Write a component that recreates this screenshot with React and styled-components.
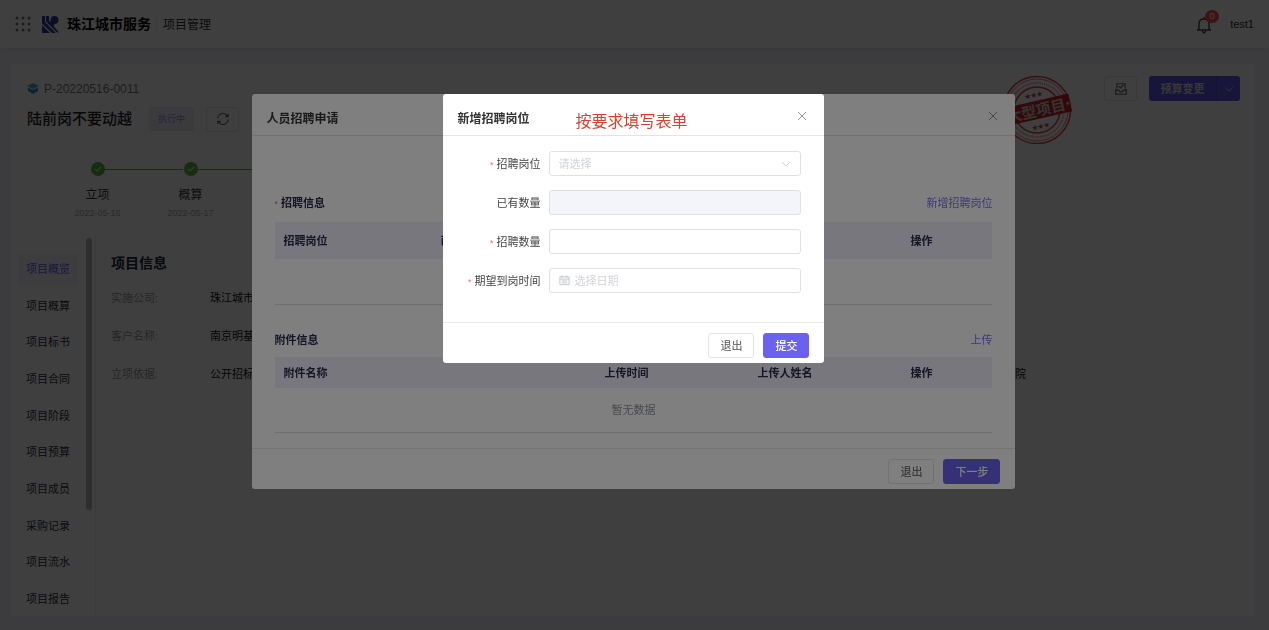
import React from "react";
import styled, { createGlobalStyle, css } from "styled-components";

const Global = createGlobalStyle`
  * { box-sizing: border-box; }
  html, body, #root { height: 100%; }
  body {
    margin: 0; overflow: hidden; background: #f0f0f8; color: #2d2d33;
    font: 11px/16px "Liberation Sans", "Noto Sans CJK SC", sans-serif;
  }
  button, input, select { font: inherit; }
  h1, h2, p, dl, dd, ol, ul { margin: 0; padding: 0; }
  ol, ul { list-style: none; }
`;

const Page = styled.div`
  height: 100vh;
  display: flex;
  flex-direction: column;
`;
const TopBar = styled.header`
  height: 48px;
  flex: none;
  padding: 0 15px;
  display: flex;
  align-items: center;
  background: #fff;
  box-shadow: 0 1px 4px rgba(0, 0, 0, 0.08);
`;
const Brand = styled.strong`
  margin-left: 8px;
  font-size: 14px;
  color: #000;
`;
const AppName = styled.span`
  margin-left: 5px;
  padding: 2px 0 0 6px;
  border-left: 1px solid #e8e8e8;
  font-size: 12px;
  color: #333;
`;
const LogoBox = styled.span`
  display: flex;
  margin-left: 9px;
`;
const Account = styled.div`
  margin-left: auto;
  display: flex;
  align-items: center;
  gap: 18px;
`;
const Bell = styled.span`
  position: relative;
  display: flex;
  padding-top: 2px;
`;
const Count = styled.span`
  position: absolute;
  left: 9px;
  top: -4px;
  width: 14px;
  height: 13px;
  border-radius: 7px;
  background: #ff4d5a;
  color: #fff;
  font-size: 9px;
  line-height: 13px;
  text-align: center;
`;
const Card = styled.main`
  flex: 1;
  min-height: 0;
  margin: 16px 15px 14px 11px;
  padding-top: 12px;
  display: flex;
  flex-direction: column;
  background: #fff;
`;
const ProjectHead = styled.div`
  display: flex;
  justify-content: space-between;
  padding: 0 14px 0 16px;
  height: 68px;
  flex: none;
`;
const Code = styled.p`
  display: flex;
  align-items: center;
  gap: 5px;
  height: 25px;
  font-size: 12px;
  color: #777;
`;
const NameRow = styled.div`
  display: flex;
  align-items: center;
  height: 36px;
`;
const ProjectName = styled.h1`
  font-size: 15px;
  line-height: 20px;
  font-weight: 500;
  color: #222;
`;
const Tag = styled.span`
  margin: 0 12px 0 17px;
  padding: 0 9px;
  line-height: 24px;
  font-size: 9px;
  border-radius: 2px;
  background: #eeecfb;
  color: #9a90ea;
`;
const IconButton = styled.button`
  width: 33px;
  height: 25px;
  padding: 0;
  display: grid;
  place-items: center;
  background: #fff;
  border: 1px solid #e6e6e6;
  border-radius: 3px;
  color: #666;
`;
const Actions = styled.div`
  display: flex;
  align-items: flex-start;
  gap: 12px;
`;
const Split = styled.div`
  display: flex;
  border-radius: 3px;
  overflow: hidden;
`;
const SplitPart = styled.button`
  height: 25px;
  padding: 0;
  width: ${(p) => (p.$narrow ? 24 : 67)}px;
  display: grid;
  place-items: center;
  border: 0;
  border-left: ${(p) => (p.$narrow ? "1px solid #5048c0" : 0)};
  background: #6056e8;
  color: #ddd;
  font-weight: 700;
`;
const Stamp = styled.svg`
  display: block;
  margin: -1px 20px 0 0;
`;
const Steps = styled.ol`
  flex: none;
  height: 91px;
  margin: 0 14px 0 12px;
  padding: 18px 0 0 28px;
  display: flex;
  background: #fdfdfd;
`;
const Step = styled.li`
  position: relative;
  width: 93px;
  display: flex;
  flex-direction: column;
  align-items: center;
  color: #333;
  font-size: 12px;
  &::after {
    content: "";
    position: absolute;
    left: 54px;
    top: 7px;
    width: 78px;
    height: 1px;
    background: #58b038;
  }
`;
const StepName = styled.span`
  margin-top: 11px;
`;
const StepDate = styled.time`
  margin-top: 2px;
  font-size: 9px;
  color: #aaa;
`;
const Body = styled.div`
  flex: 1;
  min-height: 0;
  display: flex;
`;
const SideNav = styled.nav`
  width: 75px;
  flex: none;
  overflow: hidden;
  padding: 18px 0 0 7px;
`;
const NavList = styled.ul`
  height: 362px;
  display: flex;
  flex-direction: column;
  justify-content: space-between;
`;
const NavLink = styled.a`
  display: block;
  width: 60px;
  line-height: 32px;
  text-align: center;
  text-decoration: none;
  color: ${(p) => (p.$active ? "#6b60ee" : "#303040")};
  background: ${(p) => (p.$active ? "#f4f4fc" : "none")};
`;
const Scroller = styled.div`
  flex: none;
  width: 10px;
  border-right: 1px solid #efefef;
  &::before {
    content: "";
    display: block;
    width: 6px;
    height: 272px;
    margin-top: 3px;
    border-radius: 3px;
    background: #bbb;
  }
`;
const Details = styled.section`
  flex: 1;
  padding: 18px 228px 0 15px;
`;
const SectionTitle = styled.h2`
  font-size: 14px;
  line-height: 20px;
  color: #222238;
`;
const DetailRow = styled.dl`
  display: flex;
  margin-top: ${(p) => (p.$first ? 17 : 22)}px;
`;
const Term = styled.dt`
  width: 99px;
  color: #999;
`;
const Value = styled.dd`
  color: #111;
  &:nth-of-type(2) { margin-left: auto; }
`;

const Overlay = styled.div`
  position: fixed;
  inset: 0;
  padding-top: 94px;
  display: flex;
  align-items: flex-start;
  justify-content: center;
  background: rgba(0, 0, 0, 0.5);
`;
const Dialog = styled.section`
  width: ${(p) => (p.$wide ? "60.2%" : "30.1%")};
  margin-right: 2px;
  background: #fff;
  border-radius: 3px;
  overflow: hidden;
`;
const DialogHead = styled.header`
  height: 42px;
  padding: 8px 15px 0;
  display: flex;
  align-items: center;
  border-bottom: 1px solid #e2e4e8;
`;
const DialogTitle = styled.h2`
  font-size: 12px;
  line-height: 18px;
  font-weight: 700;
  color: #333;
`;
const Note = styled.p`
  margin: 6px 0 0 46px;
  font-size: 16px;
  line-height: 24px;
  color: #d9432f;
`;
const Close = styled.button`
  margin: -6px 0 0 auto;
  width: 14px;
  height: 14px;
  padding: 0;
  display: grid;
  place-items: center;
  border: 0;
  background: none;
  color: #909399;
`;
const DialogFoot = styled.footer`
  height: 41px;
  padding: 4px 15px 0;
  display: flex;
  align-items: center;
  justify-content: flex-end;
  gap: 9px;
  border-top: 1px solid #e8e8ea;
`;
const Button = styled.button`
  height: 25px;
  padding: 1px 11px 0;
  border-radius: 3px;
  border: 1px solid #e3e4e8;
  background: #fff;
  color: #555;
  ${(p) => p.$primary && css`
    border-color: #6a62ef;
    background: #6a62ef;
    color: #fff;
    font-weight: 500;
  `}
`;
const WideBody = styled.div`
  height: 312px;
  padding: 53px 23px 0;
`;
const BlockHead = styled.div`
  display: flex;
  align-items: center;
  justify-content: space-between;
  height: ${(p) => (p.$spaced ? 28 : 34)}px;
  margin-bottom: ${(p) => (p.$spaced ? 5 : 0)}px;
`;
const BlockTitle = styled.h2`
  font-size: 11px;
  line-height: 16px;
  font-weight: 700;
  color: #2a2a4c;
`;
const TextLink = styled.a`
  color: #7b70ee;
  text-decoration: none;
`;
const Star = styled.span`
  margin-right: 3px;
  color: #f56c6c;
  font-size: 9px;
  font-weight: 400;
`;
const Table = styled.table`
  width: 100%;
  table-layout: fixed;
  border-collapse: collapse;
  border-bottom: 1px solid #dcdce2;
  margin-bottom: ${(p) => (p.$short ? 0 : 18)}px;
  th {
    height: ${(p) => (p.$short ? 31 : 37)}px;
    padding: 1px 9px 0;
    background: #efeffa;
    color: #2a2a4c;
    font-weight: 700;
    text-align: left;
  }
  th:last-child { width: 91px; }
  td {
    height: 45px;
    padding: 1px 0 0;
    text-align: center;
    color: #909399;
  }
`;
const Form = styled.form`
  height: 186px;
  padding: 15px 23px 0 15px;
  display: flex;
  flex-direction: column;
  gap: 14px;
`;
const Field = styled.div`
  display: flex;
  align-items: center;
`;
const Label = styled.label`
  width: 83px;
  padding-top: 1px;
  margin-right: 8px;
  flex: none;
  text-align: right;
  color: #444;
`;
const Control = styled.span`
  flex: 1;
  min-width: 0;
  height: 25px;
  padding: 0 9px;
  display: flex;
  align-items: center;
  gap: 5px;
  border: 1px solid #dfe1e8;
  border-radius: 3px;
  color: #c0c4cc;
  background: ${(p) => (p.$disabled ? "#f4f4fb" : "#fff")};
`;
const bare = css`
  flex: 1;
  min-width: 0;
  padding: 0;
  border: 0;
  outline: 0;
  background: none;
`;
const Input = styled.input`
  ${bare}
  &::placeholder { color: #d2d4da; }
`;
const Select = styled.select`
  ${bare}
  appearance: none;
  color: #d2d4da;
`;

const Icon = ({ size = 12, children, ...rest }) => (
  <svg width={size} height={size} viewBox="0 0 24 24" fill="none" stroke="currentColor" strokeWidth="2" {...rest}>{children}</svg>
);
const Cross = () => <Icon size={12}><path d="M4 4l16 16M20 4L4 20" /></Icon>;
const Chevron = () => <Icon size={10}><path d="M3 8l9 9 9-9" /></Icon>;

const Dots = () => (
  <svg width="17" height="17" viewBox="0 0 17 17" fill="#777">
    {[2, 8, 14].map((y) => [2, 8, 14].map((x) => <circle key={`${x}-${y}`} cx={x} cy={y} r="1.5" />))}
  </svg>
);
const Logo = () => (
  <svg width="18" height="17" viewBox="0 0 18 17" fill="#2c3a94">
    <path d="M1 0h3v6l11 11h-4L1 7.500z" />
    <path d="M5 0h3v4.500L10 7l8 9.500h-2L5 5.500z" />
    <path d="M1 9l8 8H1z" />
    <path d="M9 6l2-2 3 4-2 2z" />
    <circle cx="13.5" cy="4" r="4" />
  </svg>
);
const BellIcon = () => (
  <svg width="16" height="18" viewBox="0 0 16 18" fill="none" stroke="#444" strokeWidth="1.400">
    <path d="M1 14h14M3 14V8c0-3 2-5 5-5s5 2 5 5v6M8 1v2M6 15l2 2 2-2" />
  </svg>
);
const Layers = () => (
  <svg width="12" height="11" viewBox="0 0 12 11">
    <path d="M6 0l6 3-6 3-6-3z" fill="#35b5d8" />
    <path d="M1 4.500l5 2.500 5-2.500V8l-5 3-5-3z" fill="#2a98c0" />
  </svg>
);
const Check = () => (
  <svg width="14" height="14" viewBox="0 0 14 14">
    <circle cx="7" cy="7" r="7" fill="#55b836" />
    <path d="M4 7l2 2 4-4" fill="none" stroke="#ddd" strokeWidth="1.200" />
  </svg>
);
const LargeProjectStamp = () => (
  <Stamp width="70" height="70" viewBox="0 0 70 70">
    <g fill="none" stroke="#d8404a">
      <circle cx="35" cy="35" r="33.500" strokeWidth="1.500" />
      <circle cx="35" cy="35" r="31" strokeWidth=".7" />
      <circle cx="35" cy="35" r="27" strokeWidth="2" strokeDasharray="1 1" opacity=".6" />
      <circle cx="35" cy="35" r="23" strokeWidth="1.500" />
    </g>
    <g transform="rotate(-13 35 35)">
      <path d="M2 26h67v18H2z" fill="#d01f28" />
      <text x="34" y="41" textAnchor="middle" fontSize="15" fontWeight="700" fontFamily="Noto Sans CJK SC" fill="#ccc">大型项目</text>
      <g fill="#c83c46" fontSize="6" textAnchor="middle">
        <text x="35" y="22">★★★</text>
        <text x="35" y="54">★★★</text>
      </g>
      <text x="69" y="37" textAnchor="end" fontSize="5" fill="#ddd">★</text>
    </g>
  </Stamp>
);

const menu = ["项目概览", "项目概算", "项目标书", "项目合同", "项目阶段", "项目预算", "项目成员", "采购记录", "项目流水", "项目报告"];
const details = [["实施公司:", "珠江城市"], ["客户名称:", "南京明基"], ["立项依据:", "公开招标", "院"]];

const FormField = ({ id, label, required, disabled, children }) => (
  <Field>
    <Label htmlFor={id}>{required && <Star>*</Star>}{label}</Label>
    <Control $disabled={disabled}>{children}</Control>
  </Field>
);

const Project = () => (
  <Page>
    <TopBar>
      <Dots />
      <LogoBox><Logo /></LogoBox>
      <Brand>珠江城市服务</Brand>
      <AppName>项目管理</AppName>
      <Account>
        <Bell><BellIcon /><Count>0</Count></Bell>
        <span>test1</span>
      </Account>
    </TopBar>
    <Card>
      <ProjectHead>
        <div>
          <Code><Layers />P-20220516-0011</Code>
          <NameRow>
            <ProjectName>陆前岗不要动越</ProjectName>
            <Tag>执行中</Tag>
            <IconButton aria-label="刷新">
              <Icon size={14}><path d="M3 11a9 9 0 0 1 16-5l2 2M21 3v5h-5M21 13a9 9 0 0 1-16 5l-2-2M3 21v-5h5" /></Icon>
            </IconButton>
          </NameRow>
        </div>
        <Actions>
          <LargeProjectStamp />
          <IconButton aria-label="归档">
            <Icon size={14}><path d="M3 12v9h18v-9M3 14h5l2 3h4l2-3h5M5 11V3h14v8M8 7l3 3 5-5" /></Icon>
          </IconButton>
          <Split>
            <SplitPart>预算变更</SplitPart>
            <SplitPart $narrow aria-label="更多"><Chevron /></SplitPart>
          </Split>
        </Actions>
      </ProjectHead>
      <Steps>
        <Step><Check /><StepName>立项</StepName><StepDate>2022-05-16</StepDate></Step>
        <Step><Check /><StepName>概算</StepName><StepDate>2022-05-17</StepDate></Step>
      </Steps>
      <Body>
        <SideNav>
          <NavList>
            {menu.map((m, i) => <li key={m}><NavLink href="#" $active={i === 0}>{m}</NavLink></li>)}
          </NavList>
        </SideNav>
        <Scroller />
        <Details>
          <SectionTitle>项目信息</SectionTitle>
          {details.map(([term, value, extra], i) => (
            <DetailRow key={term} $first={i === 0}>
              <Term>{term}</Term><Value>{value}</Value>{extra && <Value>{extra}</Value>}
            </DetailRow>
          ))}
        </Details>
      </Body>
    </Card>
  </Page>
);

const RequestDialog = () => (
  <Overlay>
    <Dialog $wide>
      <DialogHead>
        <DialogTitle>人员招聘申请</DialogTitle>
        <Close aria-label="关闭"><Cross /></Close>
      </DialogHead>
      <WideBody>
        <BlockHead $spaced>
          <BlockTitle><Star>*</Star>招聘信息</BlockTitle>
          <TextLink href="#">新增招聘岗位</TextLink>
        </BlockHead>
        <Table>
          <thead><tr><th>招聘岗位</th><th>已有数量</th><th /><th /><th>操作</th></tr></thead>
          <tbody><tr><td colSpan={5} /></tr></tbody>
        </Table>
        <BlockHead>
          <BlockTitle>附件信息</BlockTitle>
          <TextLink href="#">上传</TextLink>
        </BlockHead>
        <Table $short>
          <colgroup><col /><col width="153" /><col width="153" /><col width="91" /></colgroup>
          <thead><tr><th>附件名称</th><th>上传时间</th><th>上传人姓名</th><th>操作</th></tr></thead>
          <tbody><tr><td colSpan={4}>暂无数据</td></tr></tbody>
        </Table>
      </WideBody>
      <DialogFoot><Button>退出</Button><Button $primary>下一步</Button></DialogFoot>
    </Dialog>
  </Overlay>
);

const PositionDialog = () => (
  <Overlay>
    <Dialog>
      <DialogHead>
        <DialogTitle>新增招聘岗位</DialogTitle>
        <Note>按要求填写表单</Note>
        <Close aria-label="关闭"><Cross /></Close>
      </DialogHead>
      <Form>
        <FormField id="position" label="招聘岗位" required>
          <Select id="position" defaultValue=""><option value="">请选择</option></Select>
          <Chevron />
        </FormField>
        <FormField id="existing" label="已有数量" disabled><Input id="existing" disabled /></FormField>
        <FormField id="amount" label="招聘数量" required><Input id="amount" /></FormField>
        <FormField id="date" label="期望到岗时间" required>
          <Icon size={11}><path d="M2 4h20v17H2zM2 9h20M7 1v5M17 1v5M6 13h12M6 17h12" /></Icon>
          <Input id="date" placeholder="选择日期" />
        </FormField>
      </Form>
      <DialogFoot><Button>退出</Button><Button $primary>提交</Button></DialogFoot>
    </Dialog>
  </Overlay>
);

export default function App() {
  return (
    <>
      <Global />
      <Project />
      <RequestDialog />
      <PositionDialog />
    </>
  );
}
